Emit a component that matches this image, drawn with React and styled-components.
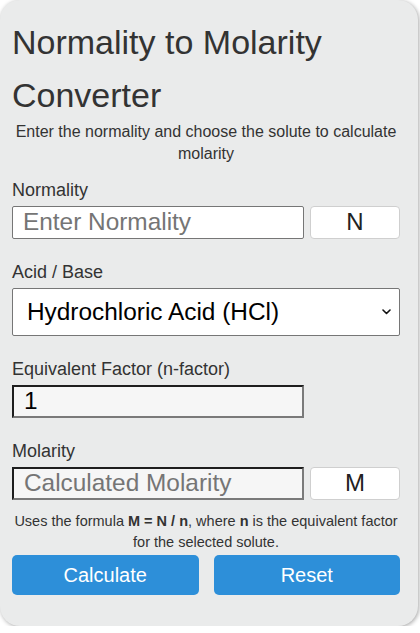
import React, { useState } from "react";
import styled, { createGlobalStyle } from "styled-components";

const Global = createGlobalStyle`
  * { box-sizing: border-box; }
  body {
    margin: 0;
    background: #ffffff;
    font-family: "Liberation Sans", Arial, sans-serif;
  }
`;

const Card = styled.div`
  width: 418px;
  height: 626px;
  background: #eaebeb;
  border-radius: 20px;
  box-shadow: 1px 1px 4px rgba(0, 0, 0, 0.35);
  padding: 16px 18px 0 12px;
  display: flex;
  flex-direction: column;
  color: #333;
`;

const Title = styled.h1`
  margin: 0;
  font-size: 34px;
  line-height: 52.5px;
  font-weight: 400;
  color: #333;
`;

const Intro = styled.p`
  margin: 0 0 14px;
  font-size: 16px;
  line-height: 22.4px;
  text-align: center;
  color: #333;
`;

const Field = styled.div`
  display: flex;
  flex-direction: column;
  gap: 5px;
  margin-bottom: ${(p) => (p.$last ? "11px" : "23px")};
`;

const Label = styled.label`
  font-size: 18px;
  line-height: 20.7px;
  color: #333;
`;

const Row = styled.div`
  display: flex;
  gap: 6px;
`;

const TextInput = styled.input`
  width: 292px;
  height: ${(p) => (p.$inset ? "33px" : "33.5px")};
  font-family: "Liberation Sans", Arial, sans-serif;
  font-size: 24.4px;
  padding: 0 10px;
  color: #000;
  outline: none;
  background: ${(p) => (p.$inset ? "#f6f6f6" : "#ffffff")};
  border-radius: ${(p) => (p.$inset ? "0" : "2px")};
  border: ${(p) => (p.$inset ? "2px solid" : "1px solid #767676")};
  border-color: ${(p) =>
    p.$inset ? "#1e1e1e #7a7a7a #7a7a7a #1e1e1e" : "#767676"};
  &::placeholder {
    color: #757575;
  }
`;

const Unit = styled.div`
  width: 91px;
  height: 33px;
  background: #ffffff;
  border: 1px solid #cfcfcf;
  border-radius: 4px;
  display: flex;
  align-items: center;
  justify-content: center;
  font-size: 24px;
  color: #222;
`;

const SelectWrap = styled.div`
  position: relative;
  width: 388px;
`;

const Select = styled.select`
  appearance: none;
  width: 100%;
  height: 48.5px;
  padding: 0 30px 0 14px;
  font-family: "Liberation Sans", Arial, sans-serif;
  font-size: 24.4px;
  color: #000;
  background: #ffffff;
  border: 1px solid #767676;
  border-radius: 2px;
  outline: none;
`;

const Chevron = styled.svg`
  position: absolute;
  right: 9px;
  top: 50%;
  margin-top: -3px;
  pointer-events: none;
`;

const Formula = styled.p`
  margin: 0 0 1px;
  font-size: 14.5px;
  line-height: 21.7px;
  text-align: center;
  color: #333;
`;

const Strong = styled.strong`
  font-weight: 700;
`;

const Buttons = styled.div`
  display: flex;
  gap: 15px;
  width: 388px;
`;

const Button = styled.button`
  flex: 1;
  height: 40px;
  border: none;
  border-radius: 5px;
  background: #2d8fd9;
  color: #ffffff;
  font-family: "Liberation Sans", Arial, sans-serif;
  font-size: 20px;
  cursor: pointer;
`;

export default function App() {
  const [normality, setNormality] = useState("");
  const [factor, setFactor] = useState("1");
  const [result, setResult] = useState("");
  const [solute, setSolute] = useState("hcl");

  const calculate = () => {
    const n = parseFloat(normality);
    const f = parseFloat(factor);
    if (!isNaN(n) && !isNaN(f) && f !== 0) setResult(String(n / f));
  };
  const reset = () => {
    setNormality("");
    setFactor("1");
    setResult("");
    setSolute("hcl");
  };

  return (
    <>
      <Global />
      <Card>
        <Title>Normality to Molarity Converter</Title>
        <Intro>
          Enter the normality and choose the solute to calculate molarity
        </Intro>

        <Field>
          <Label>Normality</Label>
          <Row>
            <TextInput
              placeholder="Enter Normality"
              value={normality}
              onChange={(e) => setNormality(e.target.value)}
            />
            <Unit>N</Unit>
          </Row>
        </Field>

        <Field>
          <Label>Acid / Base</Label>
          <SelectWrap>
            <Select value={solute} onChange={(e) => setSolute(e.target.value)}>
              <option value="hcl">Hydrochloric Acid (HCl)</option>
              <option value="h2so4">Sulfuric Acid (H2SO4)</option>
              <option value="naoh">Sodium Hydroxide (NaOH)</option>
            </Select>
            <Chevron width="9" height="6" viewBox="0 0 9 6">
              <path
                d="M1 1 L4.5 4.5 L8 1"
                fill="none"
                stroke="#111"
                strokeWidth="1.6"
                strokeLinecap="round"
                strokeLinejoin="round"
              />
            </Chevron>
          </SelectWrap>
        </Field>

        <Field>
          <Label>Equivalent Factor (n-factor)</Label>
          <Row>
            <TextInput
              $inset
              value={factor}
              onChange={(e) => setFactor(e.target.value)}
            />
          </Row>
        </Field>

        <Field $last>
          <Label>Molarity</Label>
          <Row>
            <TextInput $inset readOnly placeholder="Calculated Molarity" value={result} />
            <Unit>M</Unit>
          </Row>
        </Field>

        <Formula>
          Uses the formula <Strong>M = N / n</Strong>, where <Strong>n</Strong> is
          the equivalent factor for the selected solute.
        </Formula>

        <Buttons>
          <Button onClick={calculate}>Calculate</Button>
          <Button onClick={reset}>Reset</Button>
        </Buttons>
      </Card>
    </>
  );
}
